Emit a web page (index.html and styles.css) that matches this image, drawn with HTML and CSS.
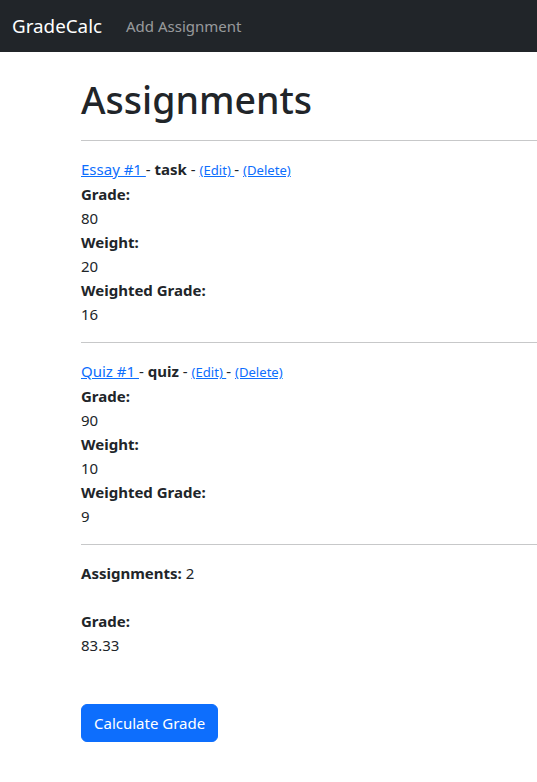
FILE: index.html
```html
<!DOCTYPE html>
<html lang="en">
<head>
<meta charset="utf-8">
<title>GradeCalc</title>
<link rel="stylesheet" href="styles.css">
</head>
<body>
<nav class="navbar">
  <a class="brand" href="#">GradeCalc</a>
  <a class="nav-link" href="#">Add Assignment</a>
</nav>
<main class="content">
  <h1 class="title">Assignments</h1>
  <hr class="rule">
  <div class="assignment">
    <div class="title-line"><a class="link" href="#">Essay #1 </a> - <b>task</b> - <a class="link small" href="#">(Edit) </a> - <a class="link small" href="#">(Delete)</a></div>
    <div class="label">Grade:</div>
    <div>80</div>
    <div class="label">Weight:</div>
    <div>20</div>
    <div class="label">Weighted Grade:</div>
    <div>16</div>
  </div>
  <hr class="rule">
  <div class="assignment">
    <div class="title-line"><a class="link" href="#">Quiz #1 </a> - <b>quiz</b> - <a class="link small" href="#">(Edit) </a> - <a class="link small" href="#">(Delete)</a></div>
    <div class="label">Grade:</div>
    <div>90</div>
    <div class="label">Weight:</div>
    <div>10</div>
    <div class="label">Weighted Grade:</div>
    <div>9</div>
  </div>
  <hr class="rule">
  <div class="summary">
    <div><b>Assignments:</b> 2</div>
    <div class="spacer"></div>
    <div class="label">Grade:</div>
    <div>83.33</div>
  </div>
  <button class="btn" type="button">Calculate Grade</button>
</main>
</body>
</html>
```
FILE: styles.css
```css
* { box-sizing: border-box; }
html, body { margin: 0; padding: 0; }
body {
  font-family: "Noto Sans", "Open Sans", "DejaVu Sans", sans-serif;
  font-size: 15px;
  line-height: 24px;
  color: #212529;
  background: #fff;
  overflow: hidden;
}
.navbar {
  display: flex;
  align-items: center;
  height: 52px;
  padding: 0 12px;
  background: #212529;
}
.brand {
  font-size: 18.8px;
  color: #fff;
  text-decoration: none;
  margin-right: 16px;
  line-height: 30px;
}
.nav-link {
  color: rgba(255, 255, 255, 0.55);
  text-decoration: none;
  padding: 8px;
}
.content {
  padding: 24px 0 40px 81px;
}
.title {
  font-size: 37.5px;
  font-weight: 500;
  line-height: 48px;
  margin: 0 0 8px;
}
.rule {
  border: 0;
  border-top: 1px solid #212529;
  opacity: 0.25;
  margin: 16px 0;
}
.link { color: #0d6efd; text-decoration: underline; }
.small { font-size: 0.875em; }
.label { font-weight: 700; }
.spacer { height: 24px; }
.btn {
  margin-top: 47px;
  display: inline-block;
  font-family: inherit;
  font-size: 15px;
  line-height: 24px;
  color: #fff;
  background: #0d6efd;
  border: 1px solid #0d6efd;
  border-radius: 6px;
  padding: 6px 12px;
}
```
